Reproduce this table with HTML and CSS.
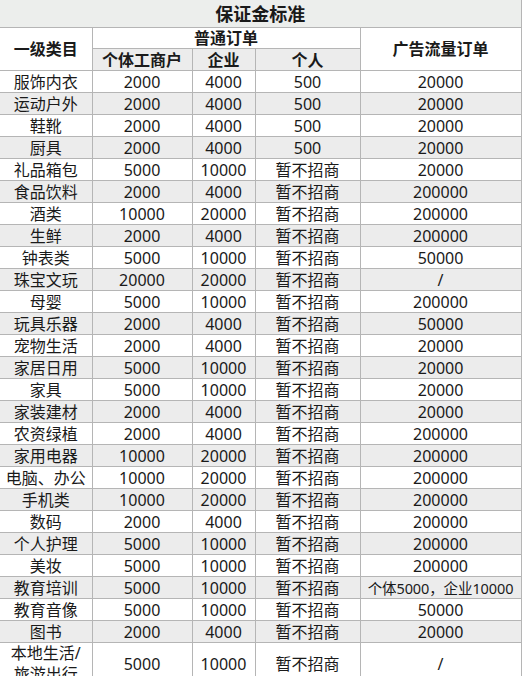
FILE: index.html
```html
<!DOCTYPE html>
<html lang="zh">
<head>
<meta charset="utf-8">
<link rel="stylesheet" href="styles.css">
</head>
<body>
<table class="sheet">
  <colgroup>
    <col class="c1"><col class="c2"><col class="c3"><col class="c4"><col class="c5">
  </colgroup>
  <thead>
    <tr class="title"><th colspan="5">保证金标准</th></tr>
    <tr class="h1">
      <th rowspan="2" class="white">一级类目</th>
      <th colspan="3" class="white">普通订单</th>
      <th rowspan="2" class="white">广告流量订单</th>
    </tr>
    <tr class="h2">
      <th>个体工商户</th><th>企业</th><th>个人</th>
    </tr>
  </thead>
  <tbody>
    <tr><td>服饰内衣</td><td>2000</td><td>4000</td><td>500</td><td>20000</td></tr>
    <tr><td>运动户外</td><td>2000</td><td>4000</td><td>500</td><td>20000</td></tr>
    <tr><td>鞋靴</td><td>2000</td><td>4000</td><td>500</td><td>20000</td></tr>
    <tr><td>厨具</td><td>2000</td><td>4000</td><td>500</td><td>20000</td></tr>
    <tr><td>礼品箱包</td><td>5000</td><td>10000</td><td>暂不招商</td><td>20000</td></tr>
    <tr><td>食品饮料</td><td>2000</td><td>4000</td><td>暂不招商</td><td>200000</td></tr>
    <tr><td>酒类</td><td>10000</td><td>20000</td><td>暂不招商</td><td>200000</td></tr>
    <tr><td>生鲜</td><td>2000</td><td>4000</td><td>暂不招商</td><td>200000</td></tr>
    <tr><td>钟表类</td><td>5000</td><td>10000</td><td>暂不招商</td><td>50000</td></tr>
    <tr><td>珠宝文玩</td><td>20000</td><td>20000</td><td>暂不招商</td><td>/</td></tr>
    <tr><td>母婴</td><td>5000</td><td>10000</td><td>暂不招商</td><td>200000</td></tr>
    <tr><td>玩具乐器</td><td>2000</td><td>4000</td><td>暂不招商</td><td>50000</td></tr>
    <tr><td>宠物生活</td><td>2000</td><td>4000</td><td>暂不招商</td><td>20000</td></tr>
    <tr><td>家居日用</td><td>5000</td><td>10000</td><td>暂不招商</td><td>20000</td></tr>
    <tr><td>家具</td><td>5000</td><td>10000</td><td>暂不招商</td><td>20000</td></tr>
    <tr><td>家装建材</td><td>2000</td><td>4000</td><td>暂不招商</td><td>20000</td></tr>
    <tr><td>农资绿植</td><td>2000</td><td>4000</td><td>暂不招商</td><td>200000</td></tr>
    <tr><td>家用电器</td><td>10000</td><td>20000</td><td>暂不招商</td><td>200000</td></tr>
    <tr><td>电脑、办公</td><td>10000</td><td>20000</td><td>暂不招商</td><td>200000</td></tr>
    <tr><td>手机类</td><td>10000</td><td>20000</td><td>暂不招商</td><td>200000</td></tr>
    <tr><td>数码</td><td>2000</td><td>4000</td><td>暂不招商</td><td>200000</td></tr>
    <tr><td>个人护理</td><td>5000</td><td>10000</td><td>暂不招商</td><td>200000</td></tr>
    <tr><td>美妆</td><td>5000</td><td>10000</td><td>暂不招商</td><td>200000</td></tr>
    <tr><td>教育培训</td><td>5000</td><td>10000</td><td>暂不招商</td><td class="small">个体5000，企业10000</td></tr>
    <tr><td>教育音像</td><td>5000</td><td>10000</td><td>暂不招商</td><td>50000</td></tr>
    <tr><td>图书</td><td>2000</td><td>4000</td><td>暂不招商</td><td>20000</td></tr>
    <tr class="tall"><td>本地生活/<br>旅游出行</td><td>5000</td><td>10000</td><td>暂不招商</td><td>/</td></tr>
  </tbody>
</table>
</body>
</html>
```

FILE: styles.css
```css
html, body {
  margin: 0;
  padding: 0;
  background: #ffffff;
}

.sheet {
  border-collapse: collapse;
  table-layout: fixed;
  width: 521px;
  font-family: "Noto Sans", "Noto Sans CJK SC", sans-serif;
  font-size: 16px;
  color: #1a1a1a;
}

.c1 { width: 92px; }
.c2 { width: 100px; }
.c3 { width: 63px; }
.c4 { width: 105px; }
.c5 { width: 161px; }

.sheet th,
.sheet td {
  border: 1px solid #b5b5b5;
  padding: 0;
  text-align: center;
  vertical-align: middle;
  white-space: nowrap;
  overflow: hidden;
  line-height: 20px;
}

.sheet th {
  font-weight: bold;
  background: #ececec;
}

.sheet th.white {
  background: #ffffff;
}

.sheet tr.title th {
  height: 27px;
  font-size: 18px;
  background: #eceeec;
  border-left: none;
  border-top: none;
}

.sheet tr.h1 th { height: 20px; }
.sheet tr.h2 th { height: 21px; }

.sheet tbody td {
  height: 21px;
}

.sheet tbody tr:nth-child(even) td {
  background: #ececec;
}

.sheet tbody tr td:first-child,
.sheet thead tr th:first-child {
  border-left: none;
}

.sheet td.small {
  font-size: 14.5px;
  letter-spacing: -0.1px;
}

.sheet tr.tall td {
  height: 42px;
  white-space: normal;
  line-height: 21px;
}
```
